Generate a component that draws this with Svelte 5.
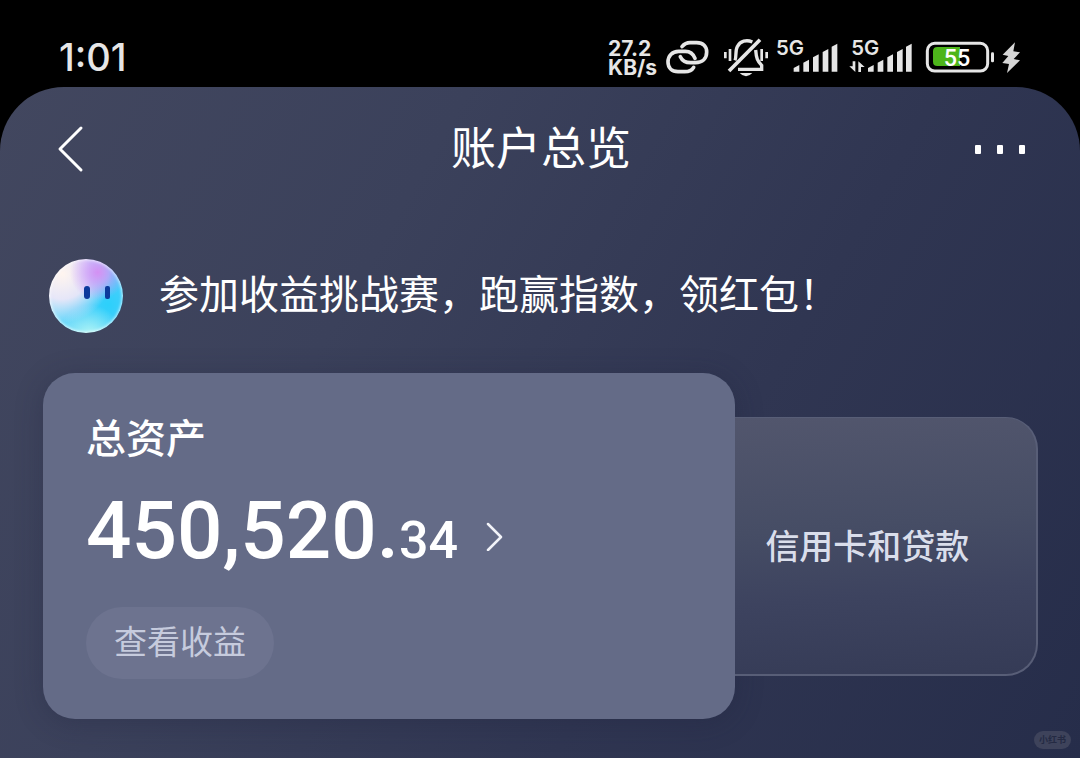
<script>
  const amount = { whole: '450,520.', cents: '34' };
  const bars = [
    { x: 0, h: 20 },
    { x: 29, h: 36 },
    { x: 58, h: 52 },
    { x: 87, h: 68 },
    { x: 114, h: 84 },
  ];
  const barPath = (left, b) =>
    `M${left + b.x} 125V${125 - b.h + 9}L${left + b.x + 17} ${125 - b.h}V125Z`;
</script>

<div class="screen" lang="zh-CN">
  <div class="status">
    <time>1:01</time>
    <div class="indicators">
      <div class="rate"><span>27.2</span><span>KB/s</span></div>
      <svg width="60" height="55" viewBox="171 0 180 165" aria-hidden="true">
        <g fill="none" stroke="#e6e6e6" stroke-width="11" stroke-linecap="round">
          <path d="M246 50Q256 38 270 38H290C310 38 320 50 320 66C320 85 308 98 286 98H272C256 98 246 91 241 80" />
          <path d="M285 85C280 72 270 64 256 64H236C216 64 204 78 204 96C204 113 215 125 234 125H254C268 125 276 121 281 112" />
        </g>
      </svg>
      <svg width="56" height="55" viewBox="351 0 168 165" aria-hidden="true">
        <g fill="none" stroke="#e6e6e6" stroke-width="10">
          <path d="M387 123L480 29" stroke-width="11" />
          <path d="M405 91C410 80 405 62 412 50C420 33 440 28 457 36" />
          <path d="M467 60C469 85 472 92 485 106V118H414" />
          <path d="M376 66V85M390 57V93M485 57V93M500 66V85" stroke-width="8" />
        </g>
        <path d="M419 129H457Q438 149 419 129Z" fill="#e6e6e6" />
      </svg>
      <svg width="72" height="55" viewBox="519 0 216 165" aria-label="5G">
        <text x="528" y="75" class="net">5G</text>
        {#each bars as b}<path d={barPath(581, b)} fill="#e6e6e6" />{/each}
      </svg>
      <svg width="76" height="55" viewBox="15 0 228 165" aria-label="5G">
        <text x="34" y="75" class="net">5G</text>
        <path d="M38 94H46V126L28 109H38ZM55 126V94L74 111H63V126Z" fill="#e6e6e6" />
        {#each bars as b}<path d={barPath(84, b)} fill="#e6e6e6" />{/each}
      </svg>
      <svg width="77" height="55" viewBox="243 0 231 165" aria-label="55">
        <rect x="262" y="40" width="181" height="83" rx="22" fill="none" stroke="#e6e6e6" stroke-width="9" />
        <path d="M292 51H360V108H292Q279 108 279 95V64Q279 51 292 51Z" fill="#4db51b" />
        <rect x="453" y="67" width="9" height="30" rx="4" fill="#e6e6e6" />
        <text x="311" y="107" class="charge">55</text>
      </svg>
      <svg width="26" height="55" viewBox="474 0 78 165" aria-hidden="true">
        <path d="M525 37L488 74L505 78L487 99L507 102L501 129L540 91L521 87L540 67L520 64Z" fill="#d6d6d6" />
      </svg>
    </div>
  </div>

  <main>
    <header>
      <button class="icon back" aria-label="返回">
        <svg width="28" height="48" viewBox="0 0 28 48"><path d="M25 3L4 24L25 45" fill="none" stroke="#fff" stroke-width="3" stroke-linecap="round" stroke-linejoin="round" /></svg>
      </button>
      <h1>账户总览</h1>
      <button class="icon more" aria-label="更多">
        <svg width="52" height="48" viewBox="0 0 52 48" fill="#fff"><rect x="1" y="20" width="6" height="9" rx="1" /><rect x="23" y="20" width="6" height="9" rx="1" /><rect x="45" y="20" width="6" height="9" rx="1" /></svg>
      </button>
    </header>

    <a class="promo" href="#challenge">
      <span class="avatar">
        <svg width="74" height="74" viewBox="0 0 74 74" aria-hidden="true"><rect x="35" y="27" width="6" height="13" rx="3" fill="#0c3a9c" /><rect x="56" y="27" width="5" height="13" rx="2" fill="#0c3a9c" /></svg>
      </span>
      <span class="slogan">参加收益挑战赛，跑赢指数，领红包！</span>
    </a>

    <div class="cards">
      <section class="assets">
        <h2>总资产</h2>
        <a class="amount" href="#assets">
          <span class="whole">{amount.whole}<span class="cents">{amount.cents}</span></span>
          <svg width="20" height="40" viewBox="0 0 20 40"><path d="M2 13L15 26L2 39" fill="none" stroke="#f2f3f8" stroke-width="2.5" stroke-linecap="round" stroke-linejoin="round" /></svg>
        </a>
        <button class="earnings">查看收益</button>
      </section>
      <button class="credit">信用卡和贷款</button>
    </div>

    <span class="mark">小红书</span>
  </main>
</div>

<style>
  :global(body) { margin: 0; background: #000; }
  .screen {
    min-height: 100vh;
    display: flex;
    flex-direction: column;
    background: #000;
    color: #fff;
    font-family: Inter, "Noto Sans CJK SC", sans-serif;
  }
  svg { display: block; flex: none; }
  button { border: 0; padding: 0; background: none; color: inherit; font: inherit; cursor: pointer; }
  a { color: inherit; text-decoration: none; }

  .status {
    box-sizing: border-box;
    height: 87px;
    padding: 30px 56px 0 59px;
    display: flex;
    justify-content: space-between;
    align-items: flex-start;
    color: #e6e6e6;
  }
  time { font-size: 38px; line-height: 55px; font-weight: 500; }
  .indicators { display: flex; align-items: center; }
  .rate {
    display: flex;
    flex-direction: column;
    font: 700 21px/19px Inter, sans-serif;
  }
  .net { font: 600 61px Inter, sans-serif; fill: #e6e6e6; }
  .charge { font: 500 70px Roboto, sans-serif; fill: #fff; }

  main {
    position: relative;
    flex: 1;
    border-radius: 64px 64px 0 0;
    background: linear-gradient(120deg, #42475f 0%, #3b415b 32%, #303652 64%, #262d4a 100%);
  }
  header {
    height: 124px;
    padding: 0 54px 0 56px;
    display: grid;
    grid-template-columns: 1fr auto 1fr;
    align-items: center;
  }
  h1 { margin: 0; font-size: 45px; line-height: 64px; font-weight: 400; }
  .more { justify-self: end; }
  .back { justify-self: start; }

  .promo {
    margin: 48px 48px 0 49px;
    display: flex;
    align-items: center;
    gap: 36px;
    font-size: 40px;
    line-height: 56px;
    font-family: "Noto Sans CJK SC", sans-serif;
  }
  .slogan { padding-bottom: 8px; }
  .avatar {
    flex: none;
    border-radius: 50%;
    box-shadow: inset 0 0 3px 1px rgba(255, 255, 255, 0.7);
    background:
      radial-gradient(circle at 66% 18%, #d490f3 0%, rgba(205, 155, 248, 0.75) 14%, transparent 36%),
      radial-gradient(circle at 18% 20%, #fff5ef 0%, rgba(244, 232, 248, 0.9) 30%, rgba(200, 222, 250, 0) 58%),
      radial-gradient(circle at 55% 104%, #b5f8f5 0%, rgba(130, 230, 250, 0) 36%),
      radial-gradient(circle at 80% 62%, #2cd0fb 0%, #4fcdfb 40%, #7fe2fb 90%);
  }

  .cards {
    margin: 40px 42px 39px 43px;
    display: flex;
    align-items: center;
  }
  .assets {
    box-sizing: border-box;
    flex: 692 1 0;
    padding: 42px 43px 40px;
    border-radius: 32px;
    background: #646b87;
    box-shadow: 0 4px 28px rgba(30, 34, 58, 0.3);
  }
  h2 { margin: 0; font-size: 40px; line-height: 48px; font-weight: 500; }
  .amount {
    margin: 20px 0 28px;
    display: flex;
    align-items: center;
    gap: 28px;
    font-family: Roboto, sans-serif;
    font-weight: 500;
  }
  .whole { font-size: 80px; line-height: 96px; }
  .cents { font-size: 52px; line-height: 52px; }
  .earnings {
    box-sizing: border-box;
    display: block;
    height: 72px;
    padding: 0 28px 6px;
    border-radius: 36px;
    background: #6d738f;
    color: #c6cbdd;
    font-size: 33px;
  }
  .credit {
    box-sizing: border-box;
    flex: 303 1 0;
    height: 259px;
    padding: 0 36px 2px 0;
    border: solid #585e77;
    border-width: 1px 2px 2px 0;
    border-radius: 0 32px 32px 0;
    background: linear-gradient(176deg, #52566d 0%, #464d65 42%, #3d435f 68%, #353b56 100%);
    color: #dadeeb;
    font-size: 34px;
    font-weight: 500;
  }
  .mark {
    position: absolute;
    right: 9px;
    bottom: 9px;
    padding: 0 5px;
    border-radius: 9px;
    background: #3e435b;
    color: #242a43;
    font-size: 9px;
    line-height: 18px;
    font-weight: 700;
  }
</style>
